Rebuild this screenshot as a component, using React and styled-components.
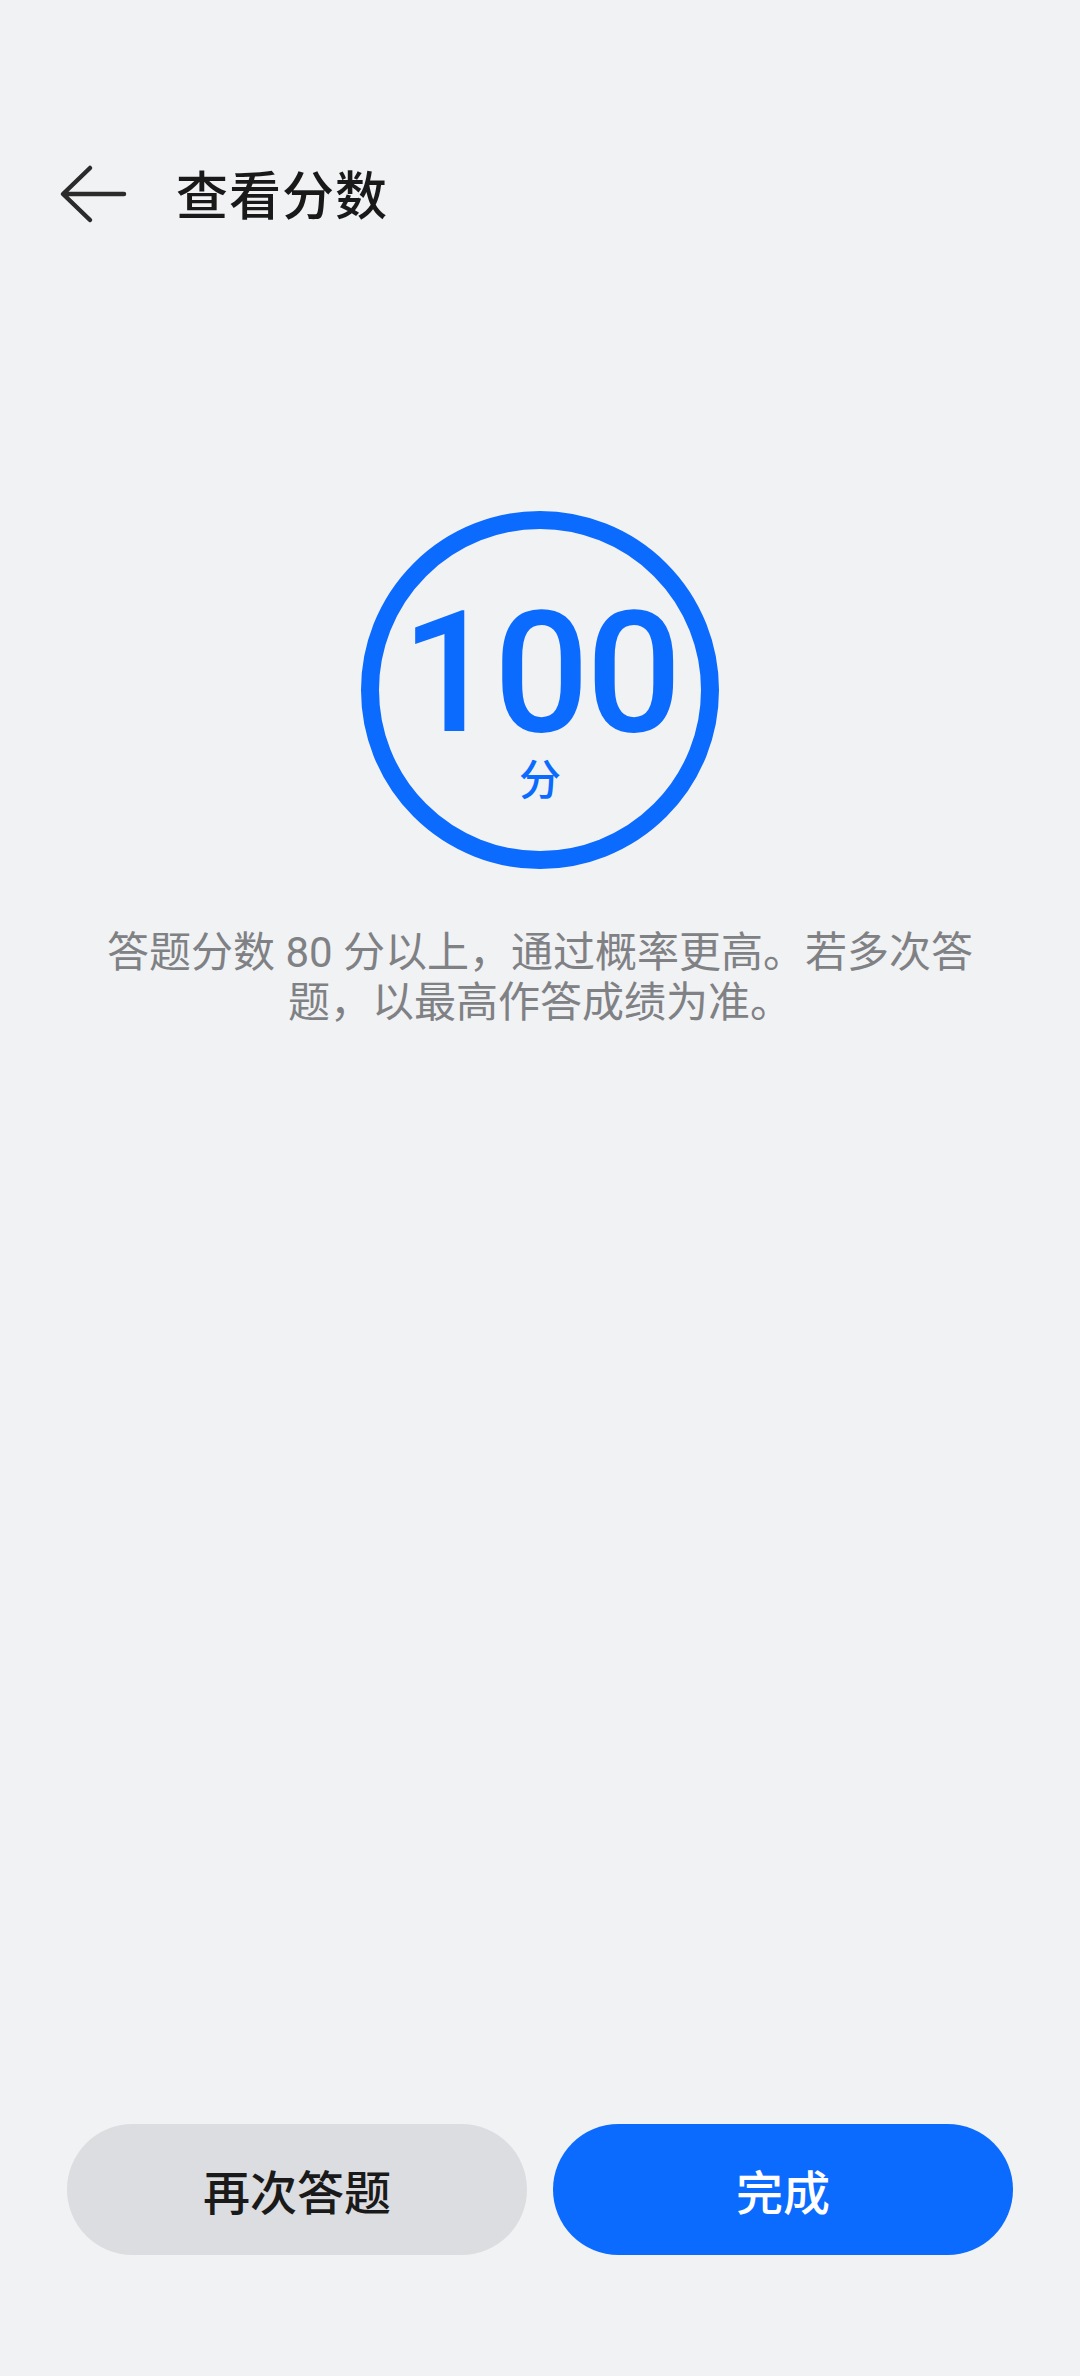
import React from 'react';
import styled, { createGlobalStyle } from 'styled-components';

const GlobalStyle = createGlobalStyle`
    html, body {
        margin: 0;
        padding: 0;
        background-color: #f1f2f4;
    }
    * {
        box-sizing: border-box;
    }
`;

const BLUE = '#0b6bfe';

export const Page = styled.div`
    display: flex;
    flex-direction: column;
    min-height: 2376px;
    background-color: #f1f2f4;
    font-family: Roboto, 'Noto Sans CJK SC', sans-serif;
`;

export const Header = styled.div`
    display: flex;
    align-items: center;
    height: 112px;
    margin-top: 136px;
    padding-left: 58px;
`;

export const BackButton = styled.button`
    display: flex;
    align-items: center;
    justify-content: center;
    width: 72px;
    height: 64px;
    margin-top: 4px;
    padding: 0;
    border: none;
    background: transparent;
    cursor: pointer;
`;

export const Title = styled.h1`
    margin: 0 0 0 46px;
    font-family: 'Noto Sans CJK SC', sans-serif;
    font-size: 52px;
    font-weight: 500;
    color: #191919;
    letter-spacing: 1px;
`;

export const ScoreWrap = styled.div`
    display: flex;
    justify-content: center;
    margin-top: 263px;
`;

export const ScoreCircle = styled.div`
    display: flex;
    flex-direction: column;
    align-items: center;
    justify-content: center;
    width: 358px;
    height: 358px;
    padding-top: 22px;
    border: 18px solid ${BLUE};
    border-radius: 50%;
    color: ${BLUE};
`;

export const ScoreNumber = styled.div`
    font-family: Roboto, sans-serif;
    font-size: 168px;
    font-weight: 500;
    line-height: 140px;
    letter-spacing: -3px;
`;

export const ScoreUnit = styled.div`
    margin-top: 12px;
    font-family: 'Noto Sans CJK SC', sans-serif;
    font-size: 42px;
    font-weight: 500;
    line-height: 42px;
`;

export const Hint = styled.p`
    margin: 59px 0 0;
    padding: 0 88px;
    font-family: Roboto, 'Noto Sans CJK SC', sans-serif;
    font-size: 42px;
    line-height: 50px;
    text-align: center;
    color: #808184;
`;

export const Spacer = styled.div`
    flex: 1;
`;

export const ButtonRow = styled.div`
    display: flex;
    gap: 26px;
    padding: 0 67px 121px;
`;

export const ActionButton = styled.button`
    flex: 1;
    height: 131px;
    border: none;
    border-radius: 66px;
    background-color: ${props => (props.primary ? BLUE : '#dcdde0')};
    color: ${props => (props.primary ? '#ffffff' : '#1a1a1a')};
    font-family: 'Noto Sans CJK SC', sans-serif;
    font-size: 47px;
    font-weight: 500;
    cursor: pointer;
`;

const BackArrow = () => (
    <svg width="72" height="64" viewBox="0 0 72 64" fill="none">
        <path
            d="M66 32H6M32 6L5 32L32 58"
            stroke="#2b2b2b"
            strokeWidth="4.5"
            strokeLinecap="round"
            strokeLinejoin="round"
        />
    </svg>
);

const App = () => {
    return (<Page>
        <GlobalStyle />
        <Header>
            <BackButton aria-label="返回">
                <BackArrow />
            </BackButton>
            <Title>查看分数</Title>
        </Header>
        <ScoreWrap>
            <ScoreCircle>
                <ScoreNumber>100</ScoreNumber>
                <ScoreUnit>分</ScoreUnit>
            </ScoreCircle>
        </ScoreWrap>
        <Hint>答题分数 80 分以上，通过概率更高。若多次答题，以最高作答成绩为准。</Hint>
        <Spacer />
        <ButtonRow>
            <ActionButton>再次答题</ActionButton>
            <ActionButton primary>完成</ActionButton>
        </ButtonRow>
    </Page>);
};

export default App;
